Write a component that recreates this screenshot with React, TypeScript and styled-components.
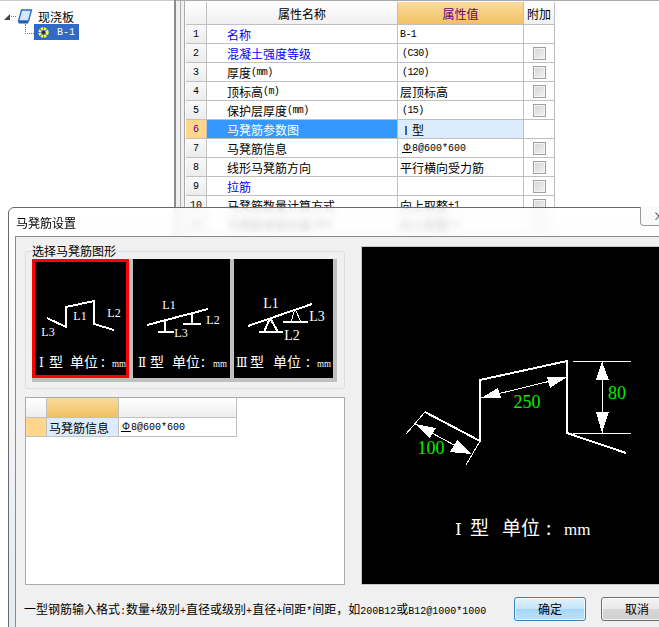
import React from "react";
import styled, { createGlobalStyle } from "styled-components";

const GlobalStyle = createGlobalStyle`
  html, body {
    margin: 0;
    padding: 0;
    background: #fff;
  }
  body {
    font-family: "Noto Sans CJK SC", "Liberation Sans", sans-serif;
    font-size: 12px;
    color: #000;
  }
`;

const getRows = () => [
  { no: "1", name: "名称", link: true, value: <Mono $tight>B-1</Mono>, check: false },
  { no: "2", name: "混凝土强度等级", link: true, value: <Paren>(C30)</Paren>, check: true },
  { no: "3", name: <>厚度<Mono $tight>(mm)</Mono></>, value: <Paren>(120)</Paren>, check: true },
  { no: "4", name: <>顶标高<Mono $tight>(m)</Mono></>, value: "层顶标高", check: true },
  { no: "5", name: <>保护层厚度<Mono $tight>(mm)</Mono></>, value: <Paren>(15)</Paren>, check: true },
  { no: "6", name: "马凳筋参数图", selected: true, value: "Ⅰ型", check: false },
  { no: "7", name: "马凳筋信息", value: <Inset><SteelValue /></Inset>, check: true },
  { no: "8", name: "线形马凳筋方向", value: "平行横向受力筋", check: true },
  { no: "9", name: "拉筋", link: true, value: "", check: true },
  { no: "10", name: "马凳筋数量计算方式", value: <>向上取整<Mono>+1</Mono></>, check: true },
  { no: "11", name: <>马凳筋单根长度<Mono $tight>(mm)</Mono></>, value: <>向上取整<Mono>+1</Mono></>, check: true },
];

function SteelValue() {
  return (
    <>
      <SteelMark>Φ</SteelMark>
      <Mono>8@600*600</Mono>
    </>
  );
}

const BookIcon = () => (
  <svg width="16" height="16" viewBox="0 0 16 16">
    <path d="M4.5 1H14.5L11.5 12H1.5Z" fill="#d6e8fb" stroke="#2a6fc0" strokeWidth="1.4" />
    <path d="M1.5 12H11.5L11 14.5H1.5Z" fill="#1f5db0" />
  </svg>
);

const GearIcon = () => (
  <svg width="11" height="11" viewBox="0 0 11 11">
    <circle cx="5.5" cy="5.5" r="3.8" fill="none" stroke="#ffff33" strokeWidth="2.8" strokeDasharray="2.2 0.8" />
    <circle cx="5.5" cy="5.5" r="1.4" fill="#222" />
  </svg>
);

type CaptionProps = {
  mark: string;
  x: number[];
};

// roman mark, 型, 单位, colon, mm
const Caption = ({ mark, x }: CaptionProps) => (
  <>
    <MarkText x={x[0]} y="367">{mark}</MarkText>
    <CapText x={x[1]} y="367">型</CapText>
    <CapText x={x[2]} y="367">单位</CapText>
    <CapText x={x[3]} y="367">:</CapText>
    <UnitText x={x[4]} y="367" textLength="14" lengthAdjust="spacingAndGlyphs">mm</UnitText>
  </>
);

const ThumbOne = () => (
  <ThumbSvg viewBox="35 262 91 113">
    <Wire points="47,318 66,327 66,307 94,301 94,324 114,330" />
    <SmallLabel x="80" y="320">L1</SmallLabel>
    <SmallLabel x="114" y="317">L2</SmallLabel>
    <SmallLabel x="48" y="336">L3</SmallLabel>
    <Caption mark="Ⅰ" x={[39, 49, 70, 101, 112]} />
  </ThumbSvg>
);

const ThumbTwo = () => (
  <ThumbSvg viewBox="133 259 97 119">
    <Wire points="147,325 208,309" />
    <Wire points="165,321 165,332" />
    <Wire points="158,332 174,332" />
    <Wire points="192,313 192,324" />
    <Wire points="183,324 201,324" />
    <SmallLabel x="169" y="309">L1</SmallLabel>
    <SmallLabel x="213" y="324">L2</SmallLabel>
    <SmallLabel x="181" y="337">L3</SmallLabel>
    <Caption mark="Ⅱ" x={[138, 150, 172, 201, 213]} />
  </ThumbSvg>
);

const ThumbThree = () => (
  <ThumbSvg viewBox="234 259 99 119">
    <Wire points="248,326 312,304" />
    <Wire points="259,332 283,332" />
    <Wire points="270,318 264,332" />
    <Wire points="270,318 278,332" />
    <Wire points="283,322 308,322" />
    <ThinWire points="295,309 291,322" />
    <ThinWire points="295,309 301,322" />
    <SmallLabel x="271" y="308" $large>L1</SmallLabel>
    <SmallLabel x="292" y="340" $large>L2</SmallLabel>
    <SmallLabel x="317" y="321" $large>L3</SmallLabel>
    <Caption mark="Ⅲ" x={[236, 250, 273, 306, 317]} />
  </ThumbSvg>
);

const PreviewDrawing = () => (
  <PreviewSvg viewBox="362 247 300 338">
    <Wire points="425,412 480,441 480,380 567,361 567,433 626,453" />
    {/* 100 */}
    <ThinWire points="425,412 406,434" />
    <ThinWire points="480,441 466,465" />
    <ThinWire points="415,424 471,454" />
    <polygon points="415,424 436,428 430,438" fill="#fff" />
    <polygon points="471,454 457,440 450,452" fill="#fff" />
    <DimText x="431" y="454">100</DimText>
    {/* 250 */}
    <ThinWire points="481,398 567,377" />
    <polygon points="481,398 498,388 501,398" fill="#fff" />
    <polygon points="567,377 547,377 550,388" fill="#fff" />
    <DimText x="527" y="408">250</DimText>
    {/* 80 */}
    <ThinWire points="573,361 631,361" />
    <ThinWire points="573,433 631,433" />
    <ThinWire points="602,362 602,433" />
    <polygon points="602,362 596,380 609,380" fill="#fff" />
    <polygon points="602,433 596,412 609,412" fill="#fff" />
    <DimText x="617" y="399">80</DimText>
    <BigMark x="455" y="535">Ⅰ</BigMark>
    <BigCaption x="470" y="535">型</BigCaption>
    <BigCaption x="502" y="535">单位</BigCaption>
    <BigCaption x="546" y="535">:</BigCaption>
    <BigUnit x="564" y="535">mm</BigUnit>
  </PreviewSvg>
);

export default function App() {
  const rows = getRows();
  return (
    <Screen>
      <GlobalStyle />
      <TreePanel>
        <TreeRow>
          <Expander />
          <TreeDots />
          <BookIcon />
          <TreeLabel>现浇板</TreeLabel>
        </TreeRow>
        <TreeChild>
          <TreeElbow />
          <TreeSelected>
            <GearIcon />
            <Mono>B-1</Mono>
          </TreeSelected>
        </TreeChild>
      </TreePanel>
      <Splitter />
      <TablePanel>
        <PropRow>
          <HeadCell />
          <HeadCell $center>属性名称</HeadCell>
          <HeadCell $center $accent>属性值</HeadCell>
          <HeadCell $center>附加</HeadCell>
        </PropRow>
        {rows.map((r) => (
          <PropRow key={r.no}>
            <NoCell $selected={r.selected}>{r.no}</NoCell>
            <NameCell $link={r.link} $selected={r.selected}>{r.name}</NameCell>
            <ValueCell $selected={r.selected}>{r.value}</ValueCell>
            <ExtraCell>{r.check && <CheckBox />}</ExtraCell>
          </PropRow>
        ))}
      </TablePanel>

      <Dialog>
        <TitleBar>
          马凳筋设置
          <CloseButton>×</CloseButton>
        </TitleBar>
        <DialogBody>
          <MainArea>
            <LeftColumn>
              <ShapeGroup>
                <ShapeLegend>选择马凳筋图形</ShapeLegend>
                <ThumbStrip>
                  <Thumb $w={97} $active><ThumbOne /></Thumb>
                  <Thumb $w={97}><ThumbTwo /></Thumb>
                  <Thumb $w={99}><ThumbThree /></Thumb>
                </ThumbStrip>
              </ShapeGroup>
              <InfoBox>
                <InfoRow>
                  <InfoHead />
                  <InfoHead $accent />
                  <InfoHead />
                </InfoRow>
                <InfoRow>
                  <InfoCell $bg="#ffd68c" />
                  <InfoCell $bg="#dcecfc">马凳筋信息</InfoCell>
                  <InfoCell $bg="#fff"><SteelValue /></InfoCell>
                </InfoRow>
              </InfoBox>
            </LeftColumn>
            <Preview>
              <PreviewDrawing />
            </Preview>
          </MainArea>
          <Footer>
            <Hint>
              一型钢筋输入格式<Mono>:</Mono>数量<Mono>+</Mono>级别<Mono>+</Mono>直径或级别<Mono>+</Mono>直径<Mono>+</Mono>间距<Mono>*</Mono>间距{"\uFF0C"}如<Mono>200B12</Mono>或<Mono>B12@1000*1000</Mono>
            </Hint>
            <DialogButton $primary>确定</DialogButton>
            <DialogButton>取消</DialogButton>
          </Footer>
        </DialogBody>
      </Dialog>
    </Screen>
  );
}

const Screen = styled.div`
  position: relative;
  display: flex;
  width: 659px;
  height: 627px;
  overflow: hidden;
  background: #fff;
`;

const TreePanel = styled.div`
  flex: none;
  box-sizing: border-box;
  width: 176px;
  height: 100%;
  padding-top: 9px;
  border-right: 2px solid #8c8c8c;
  box-shadow: inset 0 5px 0 -4px #ccc;
`;

const TreeRow = styled.div`
  display: flex;
  align-items: center;
  height: 15px;
  padding-left: 4px;
`;

const Expander = styled.span`
  width: 0;
  height: 0;
  border-left: 6px solid transparent;
  border-bottom: 6px solid #444;
`;

const TreeDots = styled.span`
  width: 5px;
  margin: 0 1px;
  border-top: 1px dotted #777;
`;

const TreeLabel = styled.span`
  margin-left: 5px;
`;

const TreeChild = styled.div`
  display: flex;
  align-items: flex-start;
  padding-left: 25px;
`;

const TreeElbow = styled.span`
  width: 8px;
  height: 9px;
  border-left: 1px dotted #777;
  border-bottom: 1px dotted #777;
`;

const TreeSelected = styled.div`
  display: flex;
  align-items: center;
  gap: 8px;
  width: 45px;
  height: 16px;
  box-sizing: border-box;
  padding-left: 4px;
  background: #316ac5;
  color: #fff;
`;

const Splitter = styled.div`
  flex: none;
  box-sizing: border-box;
  width: 8px;
  height: 100%;
  border-top: 1px solid #aaa;
  background: linear-gradient(90deg, #f0f0f0 4px, #aaa 4px, #aaa 5px, #f0f0f0 5px);
`;

const TablePanel = styled.div`
  flex: 1;
  box-sizing: border-box;
  padding: 1px 0 0 1px;
  border-top: 1px solid #aaa;
  border-left: 1px solid #aaa;
`;

const PropRow = styled.div`
  display: grid;
  grid-template-columns: 21px 191px 126px 31px;
  width: 369px;
`;

const cellBase = `
  display: flex;
  align-items: center;
  box-sizing: border-box;
  height: 19px;
  border-right: 1px solid #c0c0c0;
  border-bottom: 1px solid #c0c0c0;
  white-space: nowrap;
  overflow: hidden;
`;

const HeadCell = styled.div<{ $center?: boolean; $accent?: boolean }>`
  ${cellBase}
  height: 23px;
  justify-content: ${(p) => (p.$center ? "center" : "flex-start")};
  background: ${(p) =>
    p.$accent
      ? "linear-gradient(#f9dc9e, #f2c062)"
      : "linear-gradient(#ffffff, #f0f0f0)"};
  color: ${(p) => (p.$accent ? "#66007f" : "#000")};
`;

const NoCell = styled.div<{ $selected?: boolean }>`
  ${cellBase}
  justify-content: center;
  font-family: "Liberation Mono", monospace;
  font-size: 10px;
  background: ${(p) =>
    p.$selected ? "#ffd68c" : "linear-gradient(#f9f9f9, #ececec)"};
  color: ${(p) => (p.$selected ? "#66007f" : "#000")};
`;

const NameCell = styled.div<{ $link?: boolean; $selected?: boolean }>`
  ${cellBase}
  padding-left: 20px;
  background: ${(p) => (p.$selected ? "#3399ff" : "#fff")};
  color: ${(p) => (p.$selected ? "#fff" : p.$link ? "#0000ff" : "#000")};
`;

const ValueCell = styled.div<{ $selected?: boolean }>`
  ${cellBase}
  padding-left: 2px;
  background: ${(p) => (p.$selected ? "#dcecfc" : "#fff")};
`;

const ExtraCell = styled.div`
  ${cellBase}
  justify-content: center;
  background: #fff;
`;

const CheckBox = styled.span`
  box-sizing: border-box;
  width: 13px;
  height: 13px;
  border: 1px solid #a0a0a0;
  box-shadow: inset 0 0 0 1px #f4f4f4;
  background: linear-gradient(135deg, #d4d4d4, #f2f2f2);
`;

const Mono = styled.span<{ $tight?: boolean }>`
  font-family: "Liberation Mono", monospace;
  font-size: 10px;
  letter-spacing: ${(p) => (p.$tight ? "-0.6px" : "0")};
`;

const Paren = styled(Mono)`
  padding-left: 2px;
  letter-spacing: -0.6px;
`;

const Inset = styled.span`
  display: inline-flex;
  align-items: center;
  padding-left: 2px;
`;

const SteelMark = styled.span`
  width: 10px;
  font-size: 10px;
  line-height: 10px;
  text-align: center;
  font-family: "Liberation Sans", sans-serif;
  border-bottom: 1px solid #000;
  height: 9px;
  overflow: hidden;
`;

const Dialog = styled.div`
  position: absolute;
  left: 8px;
  top: 207px;
  display: flex;
  flex-direction: column;
  box-sizing: border-box;
  width: 680px;
  height: 440px;
  border: 1px solid #6a6a6a;
  border-radius: 6px 6px 0 0;
  background: linear-gradient(rgba(255, 255, 255, 0.8), rgba(225, 232, 238, 0.92));
  backdrop-filter: blur(3px);
`;

const TitleBar = styled.div`
  position: relative;
  display: flex;
  flex: none;
  align-items: center;
  height: 28px;
  padding-left: 7px;
`;

const CloseButton = styled.span`
  position: absolute;
  top: -1px;
  left: 631px;
  width: 40px;
  height: 19px;
  box-sizing: border-box;
  padding-left: 12px;
  line-height: 17px;
  border: 1px solid #999;
  border-top: 0;
  border-radius: 0 0 4px 4px;
  background: #fafafa;
  color: #444;
`;

const DialogBody = styled.div`
  flex: 1;
  margin-left: 6px;
  border: 1px solid #8a8a8a;
  background: #f0f0f0;
`;

const MainArea = styled.div`
  display: grid;
  grid-template-columns: 320px 1fr;
  gap: 16px;
  padding: 6px 0 0 9px;
`;

const LeftColumn = styled.div`
  display: flex;
  flex-direction: column;
  gap: 8px;
`;

const ShapeGroup = styled.fieldset`
  box-sizing: border-box;
  height: 146px;
  margin: 0;
  padding: 0 0 0 6px;
  min-width: 0;
  border: 1px solid #d5dfe5;
  border-radius: 3px;
`;

const ShapeLegend = styled.legend`
  padding: 0;
  line-height: 16px;
`;

const ThumbStrip = styled.div`
  display: flex;
  gap: 4px;
  width: 305px;
  box-sizing: border-box;
  padding-bottom: 4px;
  background: #c0c0c0;
`;

const Thumb = styled.div<{ $w: number; $active?: boolean }>`
  flex: none;
  box-sizing: border-box;
  width: ${(p) => p.$w}px;
  height: 119px;
  background: #000;
  border: ${(p) => (p.$active ? "3px solid #ff0000" : "0")};
`;

const ThumbSvg = styled.svg.attrs({ shapeRendering: "crispEdges" })`
  display: block;
  width: 100%;
  height: 100%;
  overflow: visible;
`;

const Wire = styled.polyline`
  fill: none;
  stroke: #fff;
  stroke-width: 2;
`;

const ThinWire = styled.polyline`
  fill: none;
  stroke: #fff;
  stroke-width: 1;
`;

const SmallLabel = styled.text<{ $large?: boolean }>`
  fill: #fff;
  font-family: "Liberation Serif", serif;
  font-size: ${(p) => (p.$large ? 14 : 12)}px;
  text-anchor: middle;
`;

const MarkText = styled.text`
  fill: #fff;
  font-family: "DejaVu Serif", serif;
  font-size: 12px;
`;

const CapText = styled.text`
  fill: #fff;
  font-family: "Noto Sans CJK SC", sans-serif;
  font-size: 14px;
`;

const UnitText = styled.text`
  fill: #fff;
  font-family: "Liberation Serif", serif;
  font-size: 10px;
`;

const DimText = styled.text`
  fill: #00ee00;
  font-family: "Liberation Serif", serif;
  font-size: 18px;
  text-anchor: middle;
`;

const BigMark = styled.text`
  fill: #fff;
  font-family: "DejaVu Serif", serif;
  font-size: 17px;
`;

const BigCaption = styled.text`
  fill: #fff;
  font-family: "Noto Sans CJK SC", sans-serif;
  font-size: 19px;
`;

const BigUnit = styled.text`
  fill: #fff;
  font-family: "Liberation Serif", serif;
  font-size: 17px;
`;

const InfoBox = styled.div`
  box-sizing: border-box;
  height: 188px;
  background: #fff;
  border: 1px solid #aaa;
`;

const InfoRow = styled.div`
  display: grid;
  grid-template-columns: 21px 72px 118px;
  width: 211px;
`;

const InfoHead = styled.div<{ $accent?: boolean }>`
  ${cellBase}
  height: 20px;
  background: ${(p) =>
    p.$accent
      ? "linear-gradient(#f9dc9e, #f2c062)"
      : "linear-gradient(#ffffff, #eeeeee)"};
`;

const InfoCell = styled.div<{ $bg: string }>`
  ${cellBase}
  padding-left: 2px;
  background: ${(p) => p.$bg};
`;

const Preview = styled.div`
  box-sizing: border-box;
  height: 339px;
  background: #000;
  border: 1px solid #c8c8c8;
  border-right: 0;
  margin-top: 3px;
`;

const PreviewSvg = styled.svg.attrs({ shapeRendering: "crispEdges" })`
  display: block;
  width: 300px;
  height: 338px;
`;

const Footer = styled.div`
  display: flex;
  align-items: center;
  height: 47px;
  padding-left: 8px;
`;

const Hint = styled.div`
  flex: none;
  width: 490px;
  white-space: nowrap;
  overflow: hidden;
`;

const DialogButton = styled.button<{ $primary?: boolean }>`
  flex: none;
  box-sizing: border-box;
  width: 72px;
  height: 24px;
  margin-right: 15px;
  padding: 0;
  font: inherit;
  color: #000;
  border: 1px solid ${(p) => (p.$primary ? "#3c7fb1" : "#707070")};
  border-radius: 3px;
  background: ${(p) =>
    p.$primary
      ? "linear-gradient(#e3f3fd 0%, #c4e5f9 48%, #a6d6f6 52%, #bfe2f9 100%)"
      : "linear-gradient(#f3f3f3 0%, #e9e9e9 48%, #d6d6d6 52%, #d0d0d0 100%)"};
  box-shadow: inset 0 0 0 1px rgba(255, 255, 255, 0.7);
`;
